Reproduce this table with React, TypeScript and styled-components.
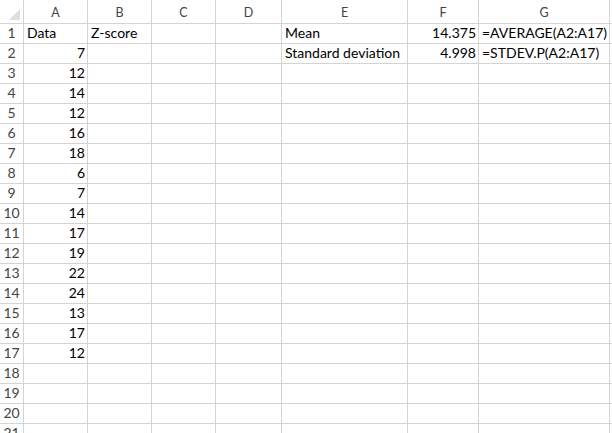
import React from "react";
import styled, { createGlobalStyle } from "styled-components";

const Global = createGlobalStyle`
  html, body { margin: 0; padding: 0; background: #ffffff; overflow: hidden; }
  body { width: 612px; height: 433px; }
`;

const Sheet = styled.div`
  display: grid;
  grid-template-columns: 24px 64px 64px 64px 66px 126px 71px 131px 1fr;
  grid-auto-rows: 20px;
  grid-template-rows: 24px;
  width: 612px;
  height: 433px;
  overflow: hidden;
  font-family: Lato, "Liberation Sans", Arial, sans-serif;
  background: #ffffff;
`;

const Corner = styled.div`
  position: relative;
  box-sizing: border-box;
  border-right: 1px solid #d4d4d4;
  border-bottom: 1px solid #d4d4d4;
  &::after {
    content: "";
    position: absolute;
    right: 3px;
    bottom: 3px;
    width: 0;
    height: 0;
    border-left: 11px solid transparent;
    border-bottom: 11px solid #dfdfdf;
  }
`;

const ColHead = styled.div`
  box-sizing: border-box;
  border-right: 1px solid #d4d4d4;
  border-bottom: 1px solid #d4d4d4;
  display: flex;
  align-items: center;
  justify-content: center;
  color: #444444;
  font-size: 12.5px;
  padding-top: 2px;
`;

const RowHead = styled.div`
  box-sizing: border-box;
  border-right: 1px solid #d4d4d4;
  border-bottom: 1px solid #d4d4d4;
  display: flex;
  align-items: flex-end;
  justify-content: center;
  color: #444444;
  font-size: 14px;
  padding-bottom: 3px;
  line-height: 1;
`;

const Cell = styled.div<{ $num?: boolean }>`
  box-sizing: border-box;
  border-right: 1px solid #d4d4d4;
  border-bottom: 1px solid #d4d4d4;
  display: flex;
  align-items: flex-end;
  justify-content: ${(p) => (p.$num ? "flex-end" : "flex-start")};
  padding: 0 2px 3px 3px;
  color: #000000;
  font-size: 14px;
  line-height: 1;
  white-space: nowrap;
  overflow: visible;
`;

const cols = ["A", "B", "C", "D", "E", "F", "G", ""];
const data = [7, 12, 14, 12, 16, 18, 6, 7, 14, 17, 19, 22, 24, 13, 17, 12];

type CellVal = { t: string; num?: boolean };

function rowCells(r: number): CellVal[] {
  const cells: CellVal[] = Array.from({ length: 8 }, () => ({ t: "" }));
  if (r === 1) {
    cells[0] = { t: "Data" };
    cells[1] = { t: "Z-score" };
    cells[4] = { t: "Mean" };
    cells[5] = { t: "14.375", num: true };
    cells[6] = { t: "=AVERAGE(A2:A17)" };
  } else if (r === 2) {
    cells[4] = { t: "Standard deviation" };
    cells[5] = { t: "4.998", num: true };
    cells[6] = { t: "=STDEV.P(A2:A17)" };
  }
  if (r >= 2 && r <= 17) {
    cells[0] = { t: String(data[r - 2]), num: true };
  }
  return cells;
}

export default function App() {
  const rows = Array.from({ length: 21 }, (_, i) => i + 1);
  return (
    <>
      <Global />
      <Sheet>
        <Corner />
        {cols.map((c, i) => (
          <ColHead key={"h" + i}>{c}</ColHead>
        ))}
        {rows.map((r) => (
          <React.Fragment key={r}>
            <RowHead>{r}</RowHead>
            {rowCells(r).map((c, i) => (
              <Cell key={i} $num={c.num}>
                {c.t}
              </Cell>
            ))}
          </React.Fragment>
        ))}
      </Sheet>
    </>
  );
}
